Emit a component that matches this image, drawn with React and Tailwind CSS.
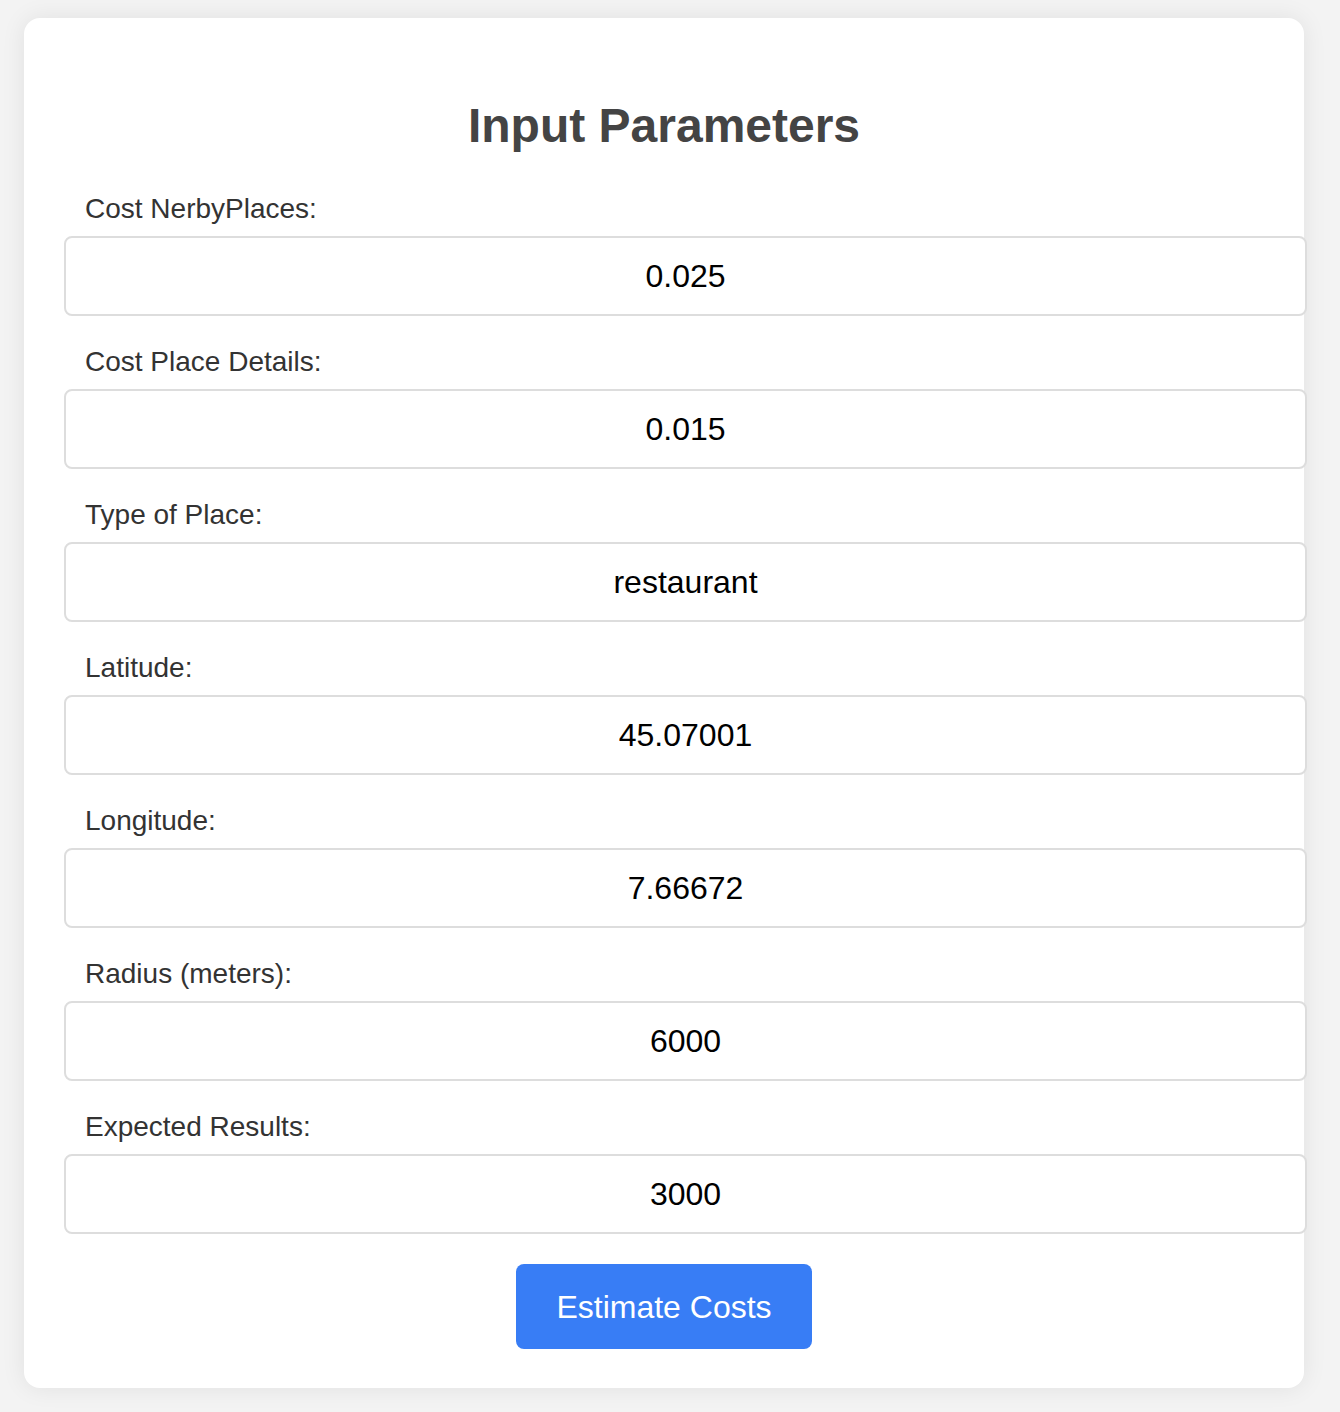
import React, { useState } from 'react';

const fields = [
  { id: 'costNearby', label: 'Cost NerbyPlaces:', value: '0.025' },
  { id: 'costDetails', label: 'Cost Place Details:', value: '0.015' },
  { id: 'placeType', label: 'Type of Place:', value: 'restaurant' },
  { id: 'latitude', label: 'Latitude:', value: '45.07001' },
  { id: 'longitude', label: 'Longitude:', value: '7.66672' },
  { id: 'radius', label: 'Radius (meters):', value: '6000' },
  { id: 'expected', label: 'Expected Results:', value: '3000' },
];

export default function App() {
  const [formData, setFormData] = useState(
    Object.fromEntries(fields.map((f) => [f.id, f.value]))
  );

  const handleChange = (e) => {
    const { name, value } = e.target;
    setFormData((prev) => ({ ...prev, [name]: value }));
  };

  return (
    <div
      className="min-h-screen bg-[#f3f3f3] pt-[18px] pb-[24px] pl-[24px]"
      style={{ fontFamily: '"Liberation Sans", Arial, sans-serif' }}
    >
      <div className="w-[1280px] bg-white rounded-[16px] shadow-[0_0_24px_rgba(0,0,0,0.08)] px-[40px] pt-[40px] pb-[39px]">
        <h2 className="text-[48px] leading-[55px] font-bold text-[#444] text-center my-[40px]">
          Input Parameters
        </h2>
        <form onSubmit={(e) => e.preventDefault()}>
          {fields.map(({ id, label }) => (
            <div key={id}>
              <label htmlFor={id} className="block ml-[21px] text-[28px] leading-[32px] text-[#333] mb-[11px]">
                {label}
              </label>
              <input
                id={id}
                name={id}
                type="text"
                value={formData[id]}
                onChange={handleChange}
                className="block w-[1243px] h-[80px] mb-[30px] border-2 border-[#ddd] rounded-[8px] text-center text-[32px] text-black bg-white outline-none"
              />
            </div>
          ))}
          <div className="flex justify-center">
            <button
              type="submit"
              className="w-[296px] h-[85px] bg-[#387df5] text-white text-[32px] rounded-[8px]"
            >
              Estimate Costs
            </button>
          </div>
        </form>
      </div>
    </div>
  );
}
